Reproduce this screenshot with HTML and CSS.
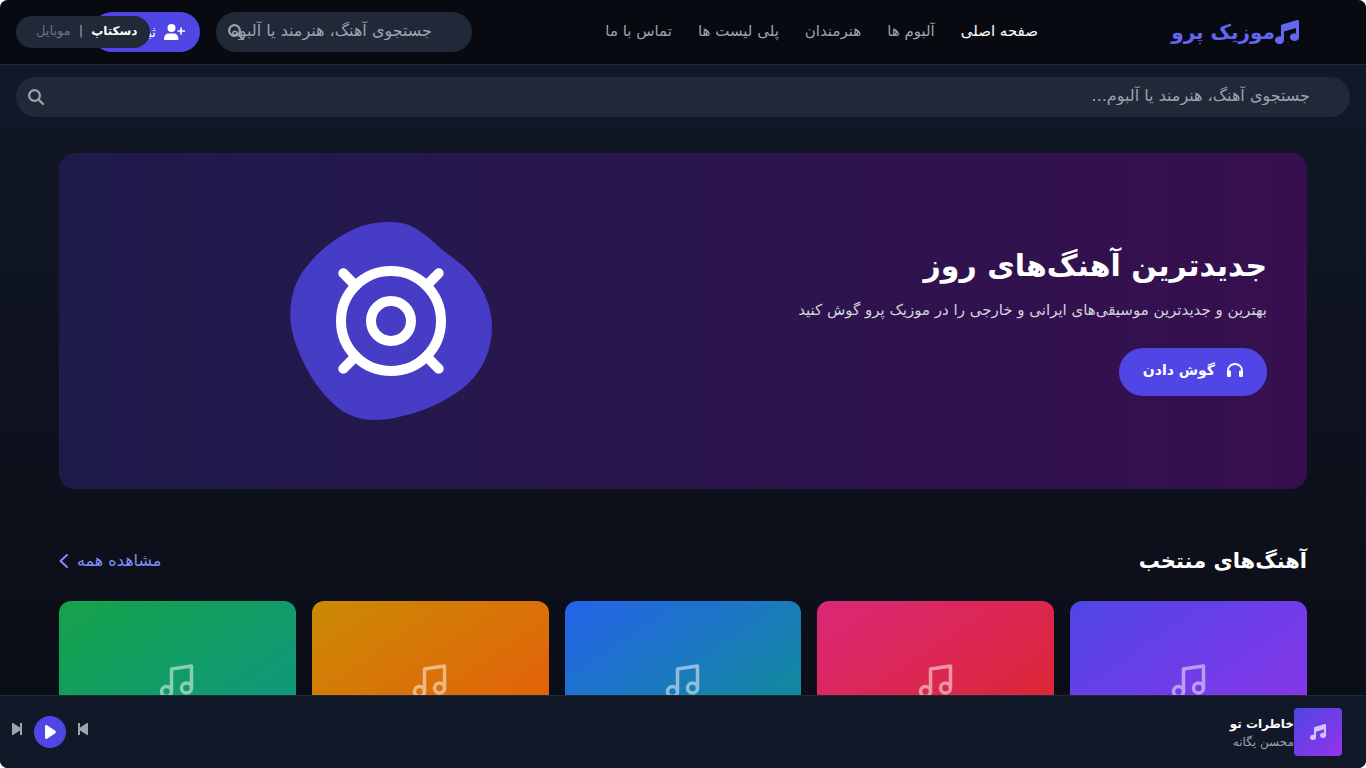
FILE: index.html
```html
<!DOCTYPE html>
<html lang="fa" dir="rtl">
<head>
<meta charset="utf-8">
<title>موزیک پرو</title>
<link rel="stylesheet" href="styles.css">
</head>
<body>
<svg class="sprite" aria-hidden="true">
  <symbol id="i-note" viewBox="0 0 24 24"><path d="M24 1.500v15.500a4.500 3.900 0 1 1-3-3.500V8L9 11.600v8.400a4.500 3.900 0 1 1-3-3.500V6c0-.7.400-1.200 1.100-1.400L22.200.100c.9-.3 1.800.4 1.800 1.400z"/></symbol>
  <symbol id="i-note-line" viewBox="0 0 48 48"><g fill="none" stroke="currentColor" stroke-width="3.500" stroke-linejoin="round"><path d="M18.500 34.500V12l20-3v22"/><circle cx="13.500" cy="34.500" r="5"/><circle cx="33.500" cy="31" r="5"/></g></symbol>
  <symbol id="i-search" viewBox="0 0 16 16"><g fill="none" stroke="currentColor" stroke-width="2.200" stroke-linecap="round"><circle cx="6.500" cy="6.500" r="5.400"/><path d="M10.600 10.600 15 15"/></g></symbol>
  <symbol id="i-user" viewBox="0 0 21 16"><circle cx="7.500" cy="4" r="4"/><path d="M0 15c0-3.500 2-5.500 5-5.500h4.500c3 0 5 2 5 5.500 0 .6-.4 1-1 1H1c-.6 0-1-.4-1-1z"/><path d="M17 3.500v7M13.500 7H21" fill="none" stroke="currentColor" stroke-width="1.700"/></symbol>
</svg>
<div class="app">
  <header class="header">
    <div class="header-inner">
      <a class="logo" href="#"><svg class="logo-icon"><use href="#i-note"/></svg>موزیک پرو</a>
      <nav class="nav">
        <a class="active" href="#">صفحه اصلی</a>
        <a href="#">آلبوم ها</a>
        <a href="#">هنرمندان</a>
        <a href="#">پلی لیست ها</a>
        <a href="#">تماس با ما</a>
      </nav>
      <div class="actions">
        <div class="search">
          <input type="text" aria-label="جستجو" placeholder="جستجوی آهنگ، هنرمند یا آلبوم...">
          <svg class="search-icon"><use href="#i-search"/></svg>
        </div>
        <button class="signup"><svg class="user-icon"><use href="#i-user"/></svg>ثبت نام</button>
      </div>
    </div>
  </header>
  <div class="view-toggle">
    <button class="on">دسکتاپ</button><span>|</span><button>موبایل</button>
  </div>
  <div class="search-row">
    <div class="search">
      <input type="text" aria-label="جستجو" placeholder="جستجوی آهنگ، هنرمند یا آلبوم...">
      <svg class="search-icon"><use href="#i-search"/></svg>
    </div>
  </div>
  <main class="main">
    <section class="hero">
      <div class="hero-text">
        <h1>جدیدترین آهنگ‌های روز</h1>
        <p>بهترین و جدیدترین موسیقی‌های ایرانی و خارجی را در موزیک پرو گوش کنید</p>
        <button class="listen"><svg class="listen-icon" viewBox="0 0 16 14"><path d="M1 10V7.500a7 6.500 0 0 1 14 0V10" fill="none" stroke="currentColor" stroke-width="1.800"/><rect x="0" y="7.500" width="4" height="6.500" rx="1.200"/><rect x="12" y="7.500" width="4" height="6.500" rx="1.200"/></svg>گوش دادن</button>
      </div>
      <div class="hero-art">
        <svg viewBox="-21 -21 768 768">
          <path fill="#4f46e5" fill-opacity=".8" d="M360 66C405 66 430 77 470 108C490 124 505 140 520 152C545 171 567 186 590 208C640 260 666 318 666 380C666 445 640 505 600 545C555 590 490 620 430 640C385 653 350 660 315 660C270 660 235 646 208 626C165 593 127 543 102 490C76 436 61 390 61 345C61 295 72 255 98 215C135 163 185 122 230 98C275 74 315 66 360 66Z"/>
          <g fill="none" stroke="#fff" stroke-width="30" stroke-linecap="round"><circle cx="363" cy="363" r="150"/><circle cx="363" cy="363" r="60"/><path d="M220 220l37 37M506 220l-37 37M220 506l37-37M506 506l-37-37"/></g>
        </svg>
      </div>
    </section>
    <section>
      <div class="section-head">
        <h2>آهنگ‌های منتخب</h2>
        <a href="#">مشاهده همه<svg class="chevron" viewBox="0 0 9 14"><path d="M8 1 1.500 7 8 13" fill="none" stroke="currentColor" stroke-width="2" stroke-linecap="round" stroke-linejoin="round"/></svg></a>
      </div>
      <div class="cards">
        <div class="card purple"><svg><use href="#i-note-line"/></svg></div>
        <div class="card red"><svg><use href="#i-note-line"/></svg></div>
        <div class="card blue"><svg><use href="#i-note-line"/></svg></div>
        <div class="card orange"><svg><use href="#i-note-line"/></svg></div>
        <div class="card green"><svg><use href="#i-note-line"/></svg></div>
      </div>
    </section>
  </main>
  <footer class="player">
    <div class="track">
      <div class="cover purple"><svg><use href="#i-note"/></svg></div>
      <div><div class="track-title">خاطرات تو</div><div class="track-artist">محسن یگانه</div></div>
    </div>
    <div class="controls">
      <button class="skip" aria-label="قبلی"><svg viewBox="0 0 10 12"><path d="M0 0h2v4.500L9 0h1v12H9L2 7.500V12H0z"/></svg></button>
      <button class="play" aria-label="پخش"><svg viewBox="0 0 11 14"><path d="M0 1.500C0 .3 1.100-.2 2 .3l8.200 5.500c.9.6.9 1.800 0 2.400L2 13.700c-.9.500-2 0-2-1.200z"/></svg></button>
      <button class="skip" aria-label="بعدی"><svg viewBox="0 0 10 12"><path d="M10 0H8v4.500L1 0H0v12h1l7-4.500V12h2z"/></svg></button>
    </div>
  </footer>
</div>
</body>
</html>
```
FILE: styles.css
```css
* { box-sizing: border-box; }
html { background: #fff; }
body {
  margin: 0;
  font: 16px/24px "DejaVu Sans", sans-serif;
  color: #fff;
}
button, input { font: inherit; color: inherit; border: 0; margin: 0; }
button { cursor: pointer; }
a { color: inherit; text-decoration: none; }
svg { display: block; fill: currentColor; flex: none; }
h1, h2, p { margin: 0; }
.sprite { position: absolute; width: 0; height: 0; }

.app {
  height: 100vh;
  display: flex;
  flex-direction: column;
  overflow: hidden;
  border-radius: 8px;
  background: linear-gradient(#111827, #0b0d16);
}
.header { flex: none; background: rgba(0, 0, 0, .55); border-bottom: 1px solid #1f2937; }
.header-inner {
  display: flex;
  align-items: center;
  justify-content: space-between;
  max-width: 1280px;
  height: 64px;
  margin: 0 auto;
  padding: 0 24px;
}
.logo { display: flex; align-items: center; color: #6366f1; font-size: 20px; font-weight: bold; }
.logo-icon { width: 24px; height: 24px; }
.nav { display: flex; gap: 26px; padding-bottom: 3px; color: #9ca3af; font-size: 15px; }
.nav .active { color: #fff; }
.actions { display: flex; gap: 16px; padding-left: 25px; }
.search { position: relative; width: 256px; }
.search input {
  display: block;
  width: 100%;
  height: 40px;
  padding: 0 40px 4px 16px;
  border-radius: 20px;
  background: #1f2937;
  font-size: 16px;
}
.search input::placeholder { color: #9ca3af; opacity: 1; }
.search-icon { position: absolute; left: 12px; top: 12px; width: 16px; height: 16px; color: #9ca3af; }
.signup {
  display: flex;
  align-items: center;
  gap: 8px;
  width: 108px;
  height: 40px;
  padding: 0 15px;
  border-radius: 20px;
  background: #4f46e5;
  font-size: 14px;
  white-space: nowrap;
}
.user-icon { width: 21px; height: 16px; }
.view-toggle {
  position: absolute;
  left: 16px;
  top: 16px;
  display: flex;
  align-items: center;
  gap: 8px;
  height: 32px;
  padding: 0 12px 2px 20px;
  border-radius: 16px;
  background: #1f2937;
  color: #6b7280;
  font-size: 13px;
}
.view-toggle button { padding: 0; background: none; }
.view-toggle .on { color: #fff; font-size: 12px; font-weight: bold; }
.view-toggle span { color: #9ca3af; }
.search-row { flex: none; padding: 12px 16px; background: #111827; }
.search-row .search { width: 100%; }

.main { flex: 1; min-height: 0; overflow: hidden; width: 100%; max-width: 1280px; margin: 0 auto; padding: 24px 16px 0; }
.hero {
  display: grid;
  grid-template-columns: 1fr 1fr;
  align-items: center;
  padding: 40px;
  margin-bottom: 48px;
  border-radius: 16px;
  background: linear-gradient(to left, #370f4f, #1e1b4b);
}
.hero h1 { margin-bottom: 12px; font-size: 30px; line-height: 40px; }
.hero p { margin-bottom: 26px; color: #d1d5db; font-size: 15px; white-space: nowrap; }
.listen {
  display: flex;
  align-items: center;
  gap: 12px;
  height: 48px;
  padding: 0 24px 4px;
  border-radius: 24px;
  background: #4f46e5;
  font-size: 14px;
  font-weight: bold;
}
.listen-icon { width: 16px; height: 14px; }
.hero-art svg { width: 256px; height: 256px; margin: 0 auto; }

.section-head { display: flex; align-items: center; justify-content: space-between; height: 48px; margin-bottom: 16px; }
.section-head h2 { font-size: 21px; line-height: 32px; }
.section-head a { display: flex; align-items: center; gap: 9px; color: #818cf8; font-size: 16px; }
.chevron { width: 9px; height: 14px; }
.cards { display: grid; grid-template-columns: repeat(5, 1fr); gap: 16px; }
.card { display: flex; align-items: center; justify-content: center; height: 160px; border-radius: 12px 12px 0 0; }
.card svg { width: 48px; height: 48px; color: #fff; opacity: .5; }
.purple { background: linear-gradient(to bottom right, #4f46e5, #9333ea); }
.red { background: linear-gradient(to bottom right, #db2777, #dc2626); }
.blue { background: linear-gradient(to bottom right, #2563eb, #0d9488); }
.orange { background: linear-gradient(to bottom right, #ca8a04, #ea580c); }
.green { background: linear-gradient(to bottom right, #16a34a, #0d9488); }

.player {
  flex: none;
  display: flex;
  align-items: center;
  justify-content: space-between;
  padding: 12px 24px 12px 12px;
  border-top: 1px solid #1f2937;
  background: #111827;
}
.track { display: flex; align-items: center; }
.cover { display: flex; align-items: center; justify-content: center; width: 48px; height: 48px; border-radius: 4px; }
.cover svg { width: 16px; height: 16px; color: rgba(255, 255, 255, .7); }
.track-title { font-size: 12px; font-weight: bold; line-height: 20px; }
.track-artist { color: #9ca3af; font-size: 12px; line-height: 16px; }
.controls { display: flex; align-items: center; gap: 12px; }
.skip { padding: 0 0 6px; background: none; color: #9ca3af; }
.skip svg { width: 10px; height: 12px; }
.play { display: flex; align-items: center; justify-content: center; width: 32px; height: 32px; padding: 0; border-radius: 16px; background: #4f46e5; }
.play svg { width: 11px; height: 14px; }
```
